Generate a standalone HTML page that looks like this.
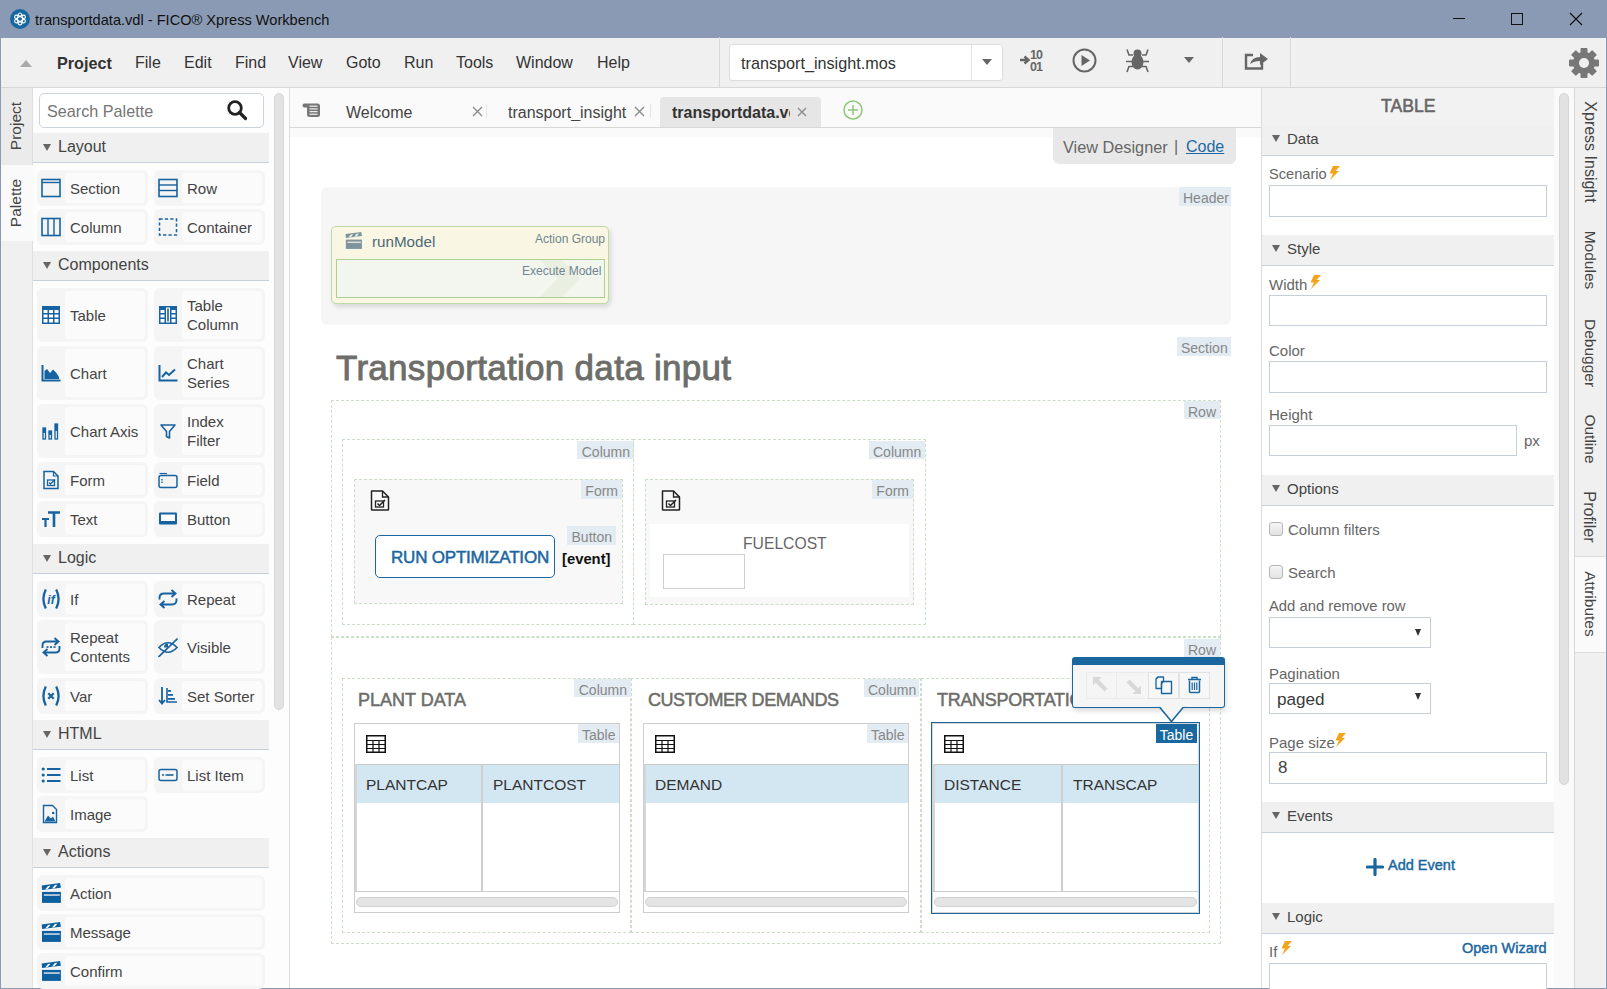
<!DOCTYPE html>
<html><head><meta charset="utf-8">
<style>
*{box-sizing:border-box;margin:0;padding:0}
html,body{width:1607px;height:989px;overflow:hidden;background:#f0f0f0;font-family:"Liberation Sans",sans-serif;color:#333}
.a{position:absolute}
.t{position:absolute;white-space:nowrap;line-height:1}
#title{left:0;top:0;width:1607px;height:38px;background:#8a9ab4}
#menubar{left:1px;top:38px;width:1605px;height:50px;background:#f0f0f0;border-bottom:1px solid #d8d8d8}
.menu{font-size:16px;color:#333;top:55px}
.sep{width:1px;background:#d9d9d9}
/* palette */
.ph{position:absolute;left:33px;width:236px;height:30px;background:#f0f0f0;border-bottom:1px solid #c6d1dc}
.ph .tri{position:absolute;left:10px;top:11px;width:0;height:0;border-left:4px solid transparent;border-right:4px solid transparent;border-top:7px solid #666}
.ph span{position:absolute;left:25px;top:4.5px;font-size:16px;color:#444;white-space:nowrap}
.pi{position:absolute;background:#f5f5f5;border-radius:6px;height:35px;width:110px}
.pi .in{position:absolute;left:28px;top:3px;right:3px;bottom:3px;background:#fbfbfb;border-radius:4px}
.pi .lbl{position:absolute;left:33px;font-size:15px;color:#444;line-height:19px;white-space:nowrap}
.pi svg{position:absolute;left:4px}
.tall{height:54px}
/* canvas */
.dash{position:absolute;border:1px dashed #c9dfc9}
.lab{position:absolute;background:#e3ebf3;color:#888;font-size:14px;line-height:19px;padding-top:2px !important;padding:0 4px;text-align:right;white-space:nowrap}
.inp{position:absolute;background:#fff;border:1px solid #c5ced9}
.rh{position:absolute;left:1262px;width:292px;height:31px;background:#f0f0f0;border-bottom:1px solid #c6d1dc}
.rh .tri{position:absolute;left:10px;top:10px;width:0;height:0;border-left:4px solid transparent;border-right:4px solid transparent;border-top:7px solid #666}
.rh span{position:absolute;left:25px;top:5px;font-size:15px;color:#444;white-space:nowrap}
.rl{position:absolute;left:1269px;font-size:15px;color:#666;white-space:nowrap;line-height:1}
.bolt{position:absolute}
.vtab{position:absolute;white-space:nowrap;font-size:15.5px;color:#444;line-height:1}
</style></head>
<body>
<!-- title bar -->
<div id="title" class="a">
  <svg class="a" style="left:9px;top:8px" width="22" height="22" viewBox="0 0 22 22">
    <circle cx="11" cy="11" r="10" fill="#16679f"/>
    <g fill="none" stroke="#fff" stroke-width="1.1">
      <ellipse cx="11" cy="11" rx="6" ry="2.4" transform="rotate(90 11 11)"/>
      <ellipse cx="11" cy="11" rx="6" ry="2.4" transform="rotate(30 11 11)"/>
      <ellipse cx="11" cy="11" rx="6" ry="2.4" transform="rotate(-30 11 11)"/>
    </g>
  </svg>
  <div class="t" style="left:35px;top:13px;font-size:14.6px;color:#111">transportdata.vdl - FICO® Xpress Workbench</div>
  <div class="a" style="left:1453px;top:18px;width:12px;height:1px;background:#111"></div>
  <div class="a" style="left:1511px;top:13px;width:12px;height:12px;border:1px solid #111"></div>
  <svg class="a" style="left:1569px;top:12px" width="14" height="14" viewBox="0 0 14 14"><path d="M1 1L13 13M13 1L1 13" stroke="#111" stroke-width="1.2"/></svg>
</div>
<!-- window borders -->
<div class="a" style="left:0;top:37px;width:1px;height:952px;background:#8a9ab4"></div>
<div class="a" style="left:1606px;top:37px;width:1px;height:952px;background:#8a9ab4"></div>
<div class="a" style="left:0;top:988px;width:1607px;height:1px;background:#8a9ab4"></div>

<!-- menubar -->
<div id="menubar" class="a"></div>
<div class="a" style="left:20px;top:60px;width:0;height:0;border-left:6px solid transparent;border-right:6px solid transparent;border-bottom:7px solid #aaa"></div>
<div class="t menu" style="left:57px;font-weight:bold;font-size:16.2px">Project</div>
<div class="t menu" style="left:135px">File</div>
<div class="t menu" style="left:184px">Edit</div>
<div class="t menu" style="left:235px">Find</div>
<div class="t menu" style="left:288px">View</div>
<div class="t menu" style="left:346px">Goto</div>
<div class="t menu" style="left:404px">Run</div>
<div class="t menu" style="left:456px">Tools</div>
<div class="t menu" style="left:516px">Window</div>
<div class="t menu" style="left:597px">Help</div>
<div class="a sep" style="left:719px;top:37px;height:50px"></div>
<div class="a" style="left:729px;top:44px;width:274px;height:37px;background:#fff;border:1px solid #dcdcdc;border-radius:3px"></div>
<div class="a sep" style="left:971px;top:45px;height:35px;background:#e3e3e3"></div>
<div class="t" style="left:741px;top:55px;font-size:16.2px;color:#333">transport_insight.mos</div>
<div class="a" style="left:982px;top:59px;width:0;height:0;border-left:5px solid transparent;border-right:5px solid transparent;border-top:6px solid #666"></div>
<svg class="a" style="left:1019px;top:48px" width="27" height="24" viewBox="0 0 27 24"><path d="M1 12H8M5.5 8.5L9.5 12L5.5 15.5" fill="none" stroke="#666" stroke-width="2.4"/><text x="11" y="11" font-family="Liberation Sans" font-weight="bold" font-size="12.5" fill="#666" textLength="13">10</text><text x="11" y="23" font-family="Liberation Sans" font-weight="bold" font-size="12.5" fill="#666" textLength="13">01</text></svg>
<svg class="a" style="left:1072px;top:48px" width="25" height="25" viewBox="0 0 25 25"><circle cx="12.5" cy="12.5" r="11" fill="none" stroke="#666" stroke-width="2"/><path d="M9.5 7V18L18 12.5Z" fill="#666"/></svg>
<svg class="a" style="left:1125px;top:48px" width="25" height="25" viewBox="0 0 25 25"><ellipse cx="12.5" cy="14" rx="6" ry="7.5" fill="#666"/><circle cx="12.5" cy="5.5" r="4" fill="#666"/><path d="M2 1.5L4 7H8M23 1.5L21 7H17M1 13.5H7M24 13.5H18M2 24L4 18.5H8M23 24L21 18.5H17" fill="none" stroke="#666" stroke-width="1.6"/></svg>
<div class="a" style="left:1184px;top:57px;width:0;height:0;border-left:5.5px solid transparent;border-right:5.5px solid transparent;border-top:6px solid #666"></div>
<svg class="a" style="left:1244px;top:51px" width="25" height="19" viewBox="0 0 25 19"><path d="M9 4H2V17.5H18V12" fill="none" stroke="#666" stroke-width="2.4"/><path d="M6 13Q8 6 16 6V2L24 8L16 14V10Q10 10 6 13Z" fill="#666"/></svg>
<svg class="a" style="left:1568px;top:47px" width="32" height="32" viewBox="0 0 32 32"><g fill="#777"><circle cx="16" cy="16" r="11"/><g id="teeth"><rect x="12.5" y="1" width="7" height="7" rx="1"/><rect x="12.5" y="24" width="7" height="7" rx="1"/><rect x="1" y="12.5" width="7" height="7" rx="1"/><rect x="24" y="12.5" width="7" height="7" rx="1"/></g><g transform="rotate(45 16 16)"><rect x="12.5" y="1" width="7" height="7" rx="1"/><rect x="12.5" y="24" width="7" height="7" rx="1"/><rect x="1" y="12.5" width="7" height="7" rx="1"/><rect x="24" y="12.5" width="7" height="7" rx="1"/></g></g><circle cx="16" cy="16" r="5" fill="#f0f0f0"/></svg>

<div class="a sep" style="left:1222px;top:37px;height:50px"></div>
<div class="a sep" style="left:1290px;top:37px;height:50px"></div>

<!-- left vertical tabs -->
<div class="a" style="left:1px;top:88px;width:32px;height:900px;background:#f0f0f0;border-right:1px solid #e0e0e0"></div>
<div class="a" style="left:1px;top:88px;width:32px;height:77px;background:#ebebeb;border-right:1px solid #dedede"></div>
<div class="a" style="left:1px;top:165px;width:33px;height:76px;background:#fafafa"></div>
<div class="vtab" style="left:16px;top:126px;transform:translate(-50%,-50%) rotate(-90deg);font-size:15.5px">Project</div>
<div class="vtab" style="left:16px;top:203px;transform:translate(-50%,-50%) rotate(-90deg);font-size:15.5px">Palette</div>

<!-- palette panel -->
<div class="a" style="left:33px;top:88px;width:257px;height:900px;background:#fdfdfd;border-right:1px solid #dcdcdc"></div>
<div class="a" style="left:39px;top:93px;width:225px;height:35px;background:#fff;border:1px solid #cbd3dd;border-radius:5px"></div>
<div class="t" style="left:47px;top:103px;font-size:16.2px;color:#757575">Search Palette</div>
<svg class="a" style="left:226px;top:99px" width="22" height="22" viewBox="0 0 22 22"><circle cx="9" cy="9" r="6.3" fill="none" stroke="#222" stroke-width="2.8"/><path d="M13.5 13.5L19.5 19.5" stroke="#222" stroke-width="3.2" stroke-linecap="round"/></svg>
<div class="a" style="left:274px;top:93px;width:10px;height:617px;background:#e2e2e2;border:1px solid #d6d6d6;border-radius:5px"></div>
<div class="ph" style="top:133px"><div class="tri"></div><span>Layout</span></div>
<div class="ph" style="top:251px"><div class="tri"></div><span>Components</span></div>
<div class="ph" style="top:544px"><div class="tri"></div><span>Logic</span></div>
<div class="ph" style="top:720px"><div class="tri"></div><span>HTML</span></div>
<div class="ph" style="top:838px"><div class="tri"></div><span>Actions</span></div>
<div class="pi" style="left:37px;top:170px;width:111px;height:36px"><div class="in"></div><svg style="top:8px" width="20" height="20" viewBox="0 0 20 20"><rect x="1" y="1.5" width="18" height="17" fill="none" stroke="#1762a0" stroke-width="1.6"/><line x1="1" y1="4.5" x2="19" y2="4.5" stroke="#1762a0" stroke-width="1.4"/></svg><div class="lbl" style="top:0;bottom:0;display:flex;align-items:center;padding-top:0px">Section</div></div>
<div class="pi" style="left:154px;top:170px;width:111px;height:36px"><div class="in"></div><svg style="top:8px" width="20" height="20" viewBox="0 0 20 20"><rect x="1" y="1.5" width="18" height="17" fill="none" stroke="#1762a0" stroke-width="1.6"/><line x1="1" y1="7" x2="19" y2="7" stroke="#1762a0" stroke-width="1.4"/><line x1="1" y1="12.5" x2="19" y2="12.5" stroke="#1762a0" stroke-width="1.4"/></svg><div class="lbl" style="top:0;bottom:0;display:flex;align-items:center;padding-top:0px">Row</div></div>
<div class="pi" style="left:37px;top:209px;width:111px;height:36px"><div class="in"></div><svg style="top:8px" width="20" height="20" viewBox="0 0 20 20"><rect x="1" y="1.5" width="18" height="17" fill="none" stroke="#1762a0" stroke-width="1.6"/><line x1="7" y1="1.5" x2="7" y2="18.5" stroke="#1762a0" stroke-width="1.4"/><line x1="13" y1="1.5" x2="13" y2="18.5" stroke="#1762a0" stroke-width="1.4"/></svg><div class="lbl" style="top:0;bottom:0;display:flex;align-items:center;padding-top:0px">Column</div></div>
<div class="pi" style="left:154px;top:209px;width:111px;height:36px"><div class="in"></div><svg style="top:8px" width="20" height="20" viewBox="0 0 20 20"><rect x="1.5" y="2" width="17" height="16" fill="none" stroke="#1762a0" stroke-width="1.5" stroke-dasharray="3.2 2.2"/></svg><div class="lbl" style="top:0;bottom:0;display:flex;align-items:center;padding-top:0px">Container</div></div>
<div class="pi" style="left:37px;top:288px;width:111px;height:54px"><div class="in"></div><svg style="top:17px" width="20" height="20" viewBox="0 0 20 20"><rect x="1" y="1" width="18" height="18" fill="#1762a0"/><g fill="#fff"><rect x="2.5" y="5" width="4" height="3"/><rect x="8" y="5" width="4" height="3"/><rect x="13.5" y="5" width="4" height="3"/><rect x="2.5" y="9.5" width="4" height="3"/><rect x="8" y="9.5" width="4" height="3"/><rect x="13.5" y="9.5" width="4" height="3"/><rect x="2.5" y="14" width="4" height="3.5"/><rect x="8" y="14" width="4" height="3.5"/><rect x="13.5" y="14" width="4" height="3.5"/></g></svg><div class="lbl" style="top:0;bottom:0;display:flex;align-items:center;padding-top:0px">Table</div></div>
<div class="pi" style="left:154px;top:288px;width:111px;height:54px"><div class="in"></div><svg style="top:17px" width="20" height="20" viewBox="0 0 20 20"><rect x="1" y="1" width="18" height="18" fill="#1762a0"/><g fill="#fff"><rect x="2.5" y="5" width="4" height="3"/><rect x="13.5" y="5" width="4" height="3"/><rect x="2.5" y="9.5" width="4" height="3"/><rect x="13.5" y="9.5" width="4" height="3"/><rect x="2.5" y="14" width="4" height="3.5"/><rect x="13.5" y="14" width="4" height="3.5"/><rect x="8" y="2.5" width="4" height="15"/></g><rect x="9.2" y="3.5" width="1.6" height="13" fill="#1762a0"/></svg><div class="lbl" style="top:0;bottom:0;display:flex;align-items:center;padding-top:0px">Table<br>Column</div></div>
<div class="pi" style="left:37px;top:346px;width:111px;height:54px"><div class="in"></div><svg style="top:17px" width="20" height="20" viewBox="0 0 20 20"><path d="M1.5 2V17.5H19.5" fill="none" stroke="#1762a0" stroke-width="2"/><path d="M3.5 16V8L6 6L9 10L12 6.5L15 9.5L18 14V16Z" fill="#1762a0"/></svg><div class="lbl" style="top:0;bottom:0;display:flex;align-items:center;padding-top:0px">Chart</div></div>
<div class="pi" style="left:154px;top:346px;width:111px;height:54px"><div class="in"></div><svg style="top:17px" width="20" height="20" viewBox="0 0 20 20"><path d="M1.5 2V17.5H19.5" fill="none" stroke="#1762a0" stroke-width="2"/><path d="M4 14L8 9.5L11 12L17 6.5" fill="none" stroke="#1762a0" stroke-width="2"/></svg><div class="lbl" style="top:0;bottom:0;display:flex;align-items:center;padding-top:0px">Chart<br>Series</div></div>
<div class="pi" style="left:37px;top:404px;width:111px;height:54px"><div class="in"></div><svg style="top:17px" width="20" height="20" viewBox="0 0 20 20"><g fill="none" stroke="#1762a0" stroke-width="1.3"><rect x="2" y="7" width="2.5" height="11"/><rect x="8" y="10" width="2.5" height="8"/><rect x="14" y="3" width="2.5" height="15"/></g><g fill="#1762a0"><rect x="2" y="7" width="2.5" height="5"/><rect x="8" y="10" width="2.5" height="4"/><rect x="14" y="3" width="2.5" height="7"/></g></svg><div class="lbl" style="top:0;bottom:0;display:flex;align-items:center;padding-top:0px">Chart Axis</div></div>
<div class="pi" style="left:154px;top:404px;width:111px;height:54px"><div class="in"></div><svg style="top:17px" width="20" height="20" viewBox="0 0 20 20"><path d="M3 4H17L11.5 10.5V17L8.5 15.5V10.5Z" fill="none" stroke="#1762a0" stroke-width="1.6" stroke-linejoin="round"/></svg><div class="lbl" style="top:0;bottom:0;display:flex;align-items:center;padding-top:0px">Index<br>Filter</div></div>
<div class="pi" style="left:37px;top:462px;width:111px;height:36px"><div class="in"></div><svg style="top:8px" width="20" height="20" viewBox="0 0 20 20"><path d="M3 1.5H12.5L17 6V18.5H3Z" fill="none" stroke="#1762a0" stroke-width="1.5"/><path d="M12.5 1.5V6H17" fill="none" stroke="#1762a0" stroke-width="1.2"/><rect x="6.5" y="10" width="7" height="5.5" fill="none" stroke="#1762a0" stroke-width="1.3"/><path d="M8 12.5L9.5 14L14 9.5" fill="none" stroke="#1762a0" stroke-width="1.4"/></svg><div class="lbl" style="top:0;bottom:0;display:flex;align-items:center;padding-top:0px">Form</div></div>
<div class="pi" style="left:154px;top:462px;width:111px;height:36px"><div class="in"></div><svg style="top:8px" width="20" height="20" viewBox="0 0 20 20"><rect x="1" y="5.5" width="18" height="12" rx="2" fill="none" stroke="#1762a0" stroke-width="1.5"/><path d="M1.5 3.5H9" stroke="#1762a0" stroke-width="1.2"/><path d="M4 9V14" stroke="#1762a0" stroke-width="1.3" stroke-dasharray="1.5 1"/></svg><div class="lbl" style="top:0;bottom:0;display:flex;align-items:center;padding-top:0px">Field</div></div>
<div class="pi" style="left:37px;top:501px;width:111px;height:36px"><div class="in"></div><svg style="top:8px" width="20" height="20" viewBox="0 0 20 20"><path d="M1 10H8M4.5 10V18" stroke="#1762a0" stroke-width="2.2" fill="none"/><path d="M7 3.5H19M13 3.5V18" stroke="#1762a0" stroke-width="2.6" fill="none"/></svg><div class="lbl" style="top:0;bottom:0;display:flex;align-items:center;padding-top:0px">Text</div></div>
<div class="pi" style="left:154px;top:501px;width:111px;height:36px"><div class="in"></div><svg style="top:8px" width="20" height="20" viewBox="0 0 20 20"><rect x="1" y="3.5" width="18" height="12" rx="1" fill="#1762a0"/><rect x="3" y="5.5" width="14" height="6.5" fill="#fff"/></svg><div class="lbl" style="top:0;bottom:0;display:flex;align-items:center;padding-top:0px">Button</div></div>
<div class="pi" style="left:37px;top:581px;width:111px;height:36px"><div class="in"></div><svg style="top:8px" width="20" height="20" viewBox="0 0 20 20"><path d="M4.8 0.5Q0 10 4.8 19.5" fill="none" stroke="#1762a0" stroke-width="2.3"/><path d="M15.2 0.5Q20 10 15.2 19.5" fill="none" stroke="#1762a0" stroke-width="2.3"/><text x="10" y="14.5" font-family="Liberation Sans" font-style="italic" font-size="12" font-weight="bold" fill="#1762a0" text-anchor="middle">if</text></svg><div class="lbl" style="top:0;bottom:0;display:flex;align-items:center;padding-top:0px">If</div></div>
<div class="pi" style="left:154px;top:581px;width:111px;height:36px"><div class="in"></div><svg style="top:8px" width="20" height="20" viewBox="0 0 20 20"><path d="M1.5 10.5V9Q1.5 4.5 6 4.5H17M13.5 1L17.5 4.5L13.5 8" fill="none" stroke="#1762a0" stroke-width="1.9"/><path d="M18.5 9.5V11Q18.5 15.5 14 15.5H3M6.5 19L2.5 15.5L6.5 12" fill="none" stroke="#1762a0" stroke-width="1.9"/></svg><div class="lbl" style="top:0;bottom:0;display:flex;align-items:center;padding-top:0px">Repeat</div></div>
<div class="pi" style="left:37px;top:620px;width:111px;height:54px"><div class="in"></div><svg style="top:17px" width="20" height="20" viewBox="0 0 20 20"><path d="M1.5 11V8.5Q1.5 4.5 5.5 4.5H17M13.5 1L17.5 4.5L13.5 8" fill="none" stroke="#1762a0" stroke-width="1.9"/><path d="M18.5 9V11.5Q18.5 15.5 14.5 15.5H3M6.5 19L2.5 15.5L6.5 12" fill="none" stroke="#1762a0" stroke-width="1.9"/><g fill="#1762a0"><rect x="5.5" y="9.2" width="2" height="1.7"/><rect x="9" y="9.2" width="2" height="1.7"/><rect x="12.5" y="9.2" width="2" height="1.7"/></g></svg><div class="lbl" style="top:0;bottom:0;display:flex;align-items:center;padding-top:0px">Repeat<br>Contents</div></div>
<div class="pi" style="left:154px;top:620px;width:111px;height:54px"><div class="in"></div><svg style="top:17px" width="20" height="20" viewBox="0 0 20 20"><path d="M1 10.5Q10 1 19 10.5Q10 20 1 10.5Z" fill="none" stroke="#1762a0" stroke-width="1.7"/><path d="M10 6.5A4 4 0 0 0 6 10.5H10Z" fill="#1762a0"/><path d="M0.5 20L19.5 1.5" stroke="#1762a0" stroke-width="1.6"/></svg><div class="lbl" style="top:0;bottom:0;display:flex;align-items:center;padding-top:0px">Visible</div></div>
<div class="pi" style="left:37px;top:678px;width:111px;height:36px"><div class="in"></div><svg style="top:8px" width="20" height="20" viewBox="0 0 20 20"><path d="M4.8 0.5Q0 10 4.8 19.5" fill="none" stroke="#1762a0" stroke-width="2.3"/><path d="M15.2 0.5Q20 10 15.2 19.5" fill="none" stroke="#1762a0" stroke-width="2.3"/><path d="M7.3 7.3L12.7 12.7M12.7 7.3L7.3 12.7" stroke="#1762a0" stroke-width="2.2"/></svg><div class="lbl" style="top:0;bottom:0;display:flex;align-items:center;padding-top:0px">Var</div></div>
<div class="pi" style="left:154px;top:678px;width:111px;height:36px"><div class="in"></div><svg style="top:8px" width="20" height="20" viewBox="0 0 20 20"><path d="M4 1V17M1 14L4 17.5L7 14" fill="none" stroke="#1762a0" stroke-width="1.8"/><path d="M9 2V16H19" fill="none" stroke="#1762a0" stroke-width="1.6"/><g fill="#1762a0"><rect x="10" y="4" width="3" height="1.8"/><rect x="10" y="8" width="5" height="1.8"/><rect x="10" y="12" width="7" height="1.8"/></g></svg><div class="lbl" style="top:0;bottom:0;display:flex;align-items:center;padding-top:0px">Set Sorter</div></div>
<div class="pi" style="left:37px;top:757px;width:111px;height:36px"><div class="in"></div><svg style="top:8px" width="20" height="20" viewBox="0 0 20 20"><g fill="#1762a0"><circle cx="2.2" cy="4" r="1.6"/><circle cx="2.2" cy="10" r="1.6"/><circle cx="2.2" cy="16" r="1.6"/><rect x="6" y="3" width="13.5" height="2"/><rect x="6" y="9" width="13.5" height="2"/><rect x="6" y="15" width="13.5" height="2"/></g></svg><div class="lbl" style="top:0;bottom:0;display:flex;align-items:center;padding-top:0px">List</div></div>
<div class="pi" style="left:154px;top:757px;width:111px;height:36px"><div class="in"></div><svg style="top:8px" width="20" height="20" viewBox="0 0 20 20"><rect x="1" y="4.5" width="18" height="11" rx="2" fill="none" stroke="#1762a0" stroke-width="1.5"/><circle cx="5" cy="10" r="1" fill="#1762a0"/><rect x="7.5" y="9.2" width="8" height="1.6" fill="#1762a0"/></svg><div class="lbl" style="top:0;bottom:0;display:flex;align-items:center;padding-top:0px">List Item</div></div>
<div class="pi" style="left:37px;top:796px;width:111px;height:36px"><div class="in"></div><svg style="top:8px" width="20" height="20" viewBox="0 0 20 20"><path d="M2.5 1.5H11.5L15.5 5.5V18.5H2.5Z" fill="none" stroke="#1762a0" stroke-width="1.4"/><path d="M3.5 17.5L7 11.5L10 14.5L12 12.5L14.5 17.5Z" fill="#1762a0"/><circle cx="12.2" cy="9" r="1.3" fill="#1762a0"/></svg><div class="lbl" style="top:0;bottom:0;display:flex;align-items:center;padding-top:0px">Image</div></div>
<div class="pi" style="left:37px;top:875px;width:228px;height:36px"><div class="in"></div><svg style="top:8px" width="20" height="20" viewBox="0 0 20 20"><path d="M0.7 2.4L19.1 0.1L19.9 4.8L1.1 7.1Z" fill="#0e5f9e"/><path d="M4.2 6.4L7 3L9.6 2.7L6.8 6.1Z M11 5.6L13.8 2.1L16.4 1.8L13.6 5.3Z" fill="#f5f5f5"/><rect x="1" y="8.9" width="18.9" height="11" fill="#0e5f9e"/><rect x="2.8" y="11.4" width="16" height="1.3" fill="#f5f5f5"/></svg><div class="lbl" style="top:0;bottom:0;display:flex;align-items:center;padding-top:0px">Action</div></div>
<div class="pi" style="left:37px;top:914px;width:228px;height:36px"><div class="in"></div><svg style="top:8px" width="20" height="20" viewBox="0 0 20 20"><path d="M0.7 2.4L19.1 0.1L19.9 4.8L1.1 7.1Z" fill="#0e5f9e"/><path d="M4.2 6.4L7 3L9.6 2.7L6.8 6.1Z M11 5.6L13.8 2.1L16.4 1.8L13.6 5.3Z" fill="#f5f5f5"/><rect x="1" y="8.9" width="18.9" height="11" fill="#0e5f9e"/><rect x="2.8" y="11.4" width="16" height="1.3" fill="#f5f5f5"/></svg><div class="lbl" style="top:0;bottom:0;display:flex;align-items:center;padding-top:0px">Message</div></div>
<div class="pi" style="left:37px;top:953px;width:228px;height:36px"><div class="in"></div><svg style="top:8px" width="20" height="20" viewBox="0 0 20 20"><path d="M0.7 2.4L19.1 0.1L19.9 4.8L1.1 7.1Z" fill="#0e5f9e"/><path d="M4.2 6.4L7 3L9.6 2.7L6.8 6.1Z M11 5.6L13.8 2.1L16.4 1.8L13.6 5.3Z" fill="#f5f5f5"/><rect x="1" y="8.9" width="18.9" height="11" fill="#0e5f9e"/><rect x="2.8" y="11.4" width="16" height="1.3" fill="#f5f5f5"/></svg><div class="lbl" style="top:0;bottom:0;display:flex;align-items:center;padding-top:0px">Confirm</div></div>


<!-- center -->
<div class="a" style="left:290px;top:88px;width:971px;height:40px;background:#fafafa;border-bottom:1px solid #d8d8d8"></div>

<div class="a" style="left:290px;top:128px;width:971px;height:860px;background:#fff"></div>
<div class="a" style="left:290px;top:128px;width:971px;height:9px;background:#fafafa"></div>
<!-- tab bar -->
<svg class="a" style="left:302px;top:103px" width="19" height="15" viewBox="0 0 19 15"><path d="M2.5 0.5H15.5Q18 0.5 18 3V11.5Q18 14 15.5 14H8Q5 14 5 11.5V4.5H2.5Q0.5 4.5 0.5 2.5Q0.5 0.5 2.5 0.5Z" fill="#777"/><g fill="#fafafa"><rect x="7.5" y="2.6" width="8" height="1.1"/><rect x="7.5" y="5.4" width="8" height="1.1"/><rect x="7.5" y="8.1" width="8" height="1.1"/><rect x="7.5" y="10.7" width="8" height="1.1"/></g></svg>
<div class="t" style="left:346px;top:105px;font-size:16px;color:#444">Welcome</div>
<svg class="a" style="left:472px;top:106px" width="11" height="11" viewBox="0 0 11 11"><path d="M1 1L10 10M10 1L1 10" stroke="#888" stroke-width="1.3"/></svg>
<div class="a" style="left:486px;top:104px;width:1px;height:14px;background:#e6e6e6"></div>
<div class="t" style="left:508px;top:105px;font-size:16px;color:#444;width:119px;overflow:hidden">transport_insight</div>
<svg class="a" style="left:634px;top:106px" width="11" height="11" viewBox="0 0 11 11"><path d="M1 1L10 10M10 1L1 10" stroke="#888" stroke-width="1.3"/></svg>
<div class="a" style="left:650px;top:104px;width:1px;height:14px;background:#e6e6e6"></div>
<div class="a" style="left:660px;top:97px;width:161px;height:30px;background:#e6e6e6;border-radius:4px 4px 0 0"></div>
<div class="t" style="left:672px;top:105px;font-size:16px;font-weight:bold;color:#333;width:118px;overflow:hidden">transportdata.vdl</div>
<svg class="a" style="left:797px;top:107px" width="10" height="10" viewBox="0 0 10 10"><path d="M1 1L9 9M9 1L1 9" stroke="#888" stroke-width="1.3"/></svg>
<svg class="a" style="left:843px;top:100px" width="20" height="20" viewBox="0 0 20 20"><circle cx="10" cy="10" r="9" fill="none" stroke="#8fc77a" stroke-width="1.5"/><path d="M10 5V15M5 10H15" stroke="#8fc77a" stroke-width="1.5"/></svg>

<!-- view designer / code -->
<div class="a" style="left:1053px;top:128px;width:183px;height:36px;background:#e8e8e8;border-radius:0 0 6px 6px"></div>
<div class="t" style="left:1063px;top:139px;font-size:16.3px;color:#666">View Designer</div><div class="t" style="left:1174px;top:139px;font-size:16px;color:#666">|</div><div class="t" style="left:1186px;top:139px;font-size:16px;color:#1b6aa5;text-decoration:underline">Code</div>

<!-- header block -->
<div class="a" style="left:321px;top:187px;width:910px;height:138px;background:#f6f6f6;border-radius:6px"></div>
<div class="lab" style="left:1179px;top:187px;width:52px;height:19px">Header</div>
<div class="a" style="left:331px;top:226px;width:278px;height:78px;background:#f9f7e3;border:1px solid #bcdba4;border-radius:5px;box-shadow:2px 3px 5px rgba(0,0,0,0.12)"></div>
<svg class="a" style="left:345px;top:232px" width="17" height="17" viewBox="0 0 20 20"><path d="M0.7 2.4L19.1 0.1L19.9 4.8L1.1 7.1Z" fill="#7d949c"/><path d="M4.2 6.4L7 3L9.6 2.7L6.8 6.1Z M11 5.6L13.8 2.1L16.4 1.8L13.6 5.3Z" fill="#f9f7e3"/><rect x="1" y="8.9" width="18.9" height="11" fill="#7d949c"/><rect x="2.8" y="11.4" width="16" height="1.3" fill="#f9f7e3"/></svg>
<div class="t" style="left:372px;top:234px;font-size:15.2px;color:#4f6878">runModel</div>
<div class="t" style="left:535px;top:233px;font-size:12px;color:#6f8490">Action Group</div>
<div class="a" style="left:336px;top:259px;width:269px;height:39px;background:#f3f6ee;border:1px solid #a9d291"></div>
<svg class="a" style="left:535px;top:260px" width="45" height="37" viewBox="0 0 45 37"><path d="M5 0H27L45 18.5L27 37H5L23 18.5Z" fill="#e9f0e1"/></svg>
<div class="t" style="left:522px;top:265px;font-size:12px;color:#6f8490">Execute Model</div>

<!-- section title -->
<div class="lab" style="left:1177px;top:337px;width:54px;height:19px">Section</div>
<div class="t" style="left:336px;top:350px;font-size:35px;color:#6d6d69;-webkit-text-stroke:0.9px #6d6d69;letter-spacing:0.3px">Transportation data input</div>

<!-- row 1 -->
<div class="dash" style="left:331px;top:400px;width:890px;height:237px"></div>
<div class="lab" style="left:1184px;top:401px;width:36px;height:18px">Row</div>
<div class="dash" style="left:342px;top:439px;width:292px;height:186px"></div>
<div class="lab" style="left:577px;top:441px;width:57px;height:18px">Column</div>
<div class="dash" style="left:354px;top:479px;width:269px;height:125px;background:#f8f8f8"></div>
<div class="lab" style="left:581px;top:480px;width:41px;height:19px">Form</div>
<svg class="a" style="left:370px;top:490px" width="20" height="21" viewBox="0 0 20 21"><path d="M1.5 1H12.5L18.5 7V19.5Q18.5 20 18 20H2Q1.5 20 1.5 19.5Z" fill="none" stroke="#222" stroke-width="1.5" stroke-linejoin="round"/><path d="M12.5 1V7H18.5" fill="none" stroke="#222" stroke-width="1.3"/><rect x="5.5" y="11" width="8" height="6" fill="none" stroke="#222" stroke-width="1.3"/><path d="M7.5 13.5L9.5 15.5L15 10" fill="none" stroke="#222" stroke-width="1.5"/></svg>
<div class="lab" style="left:567px;top:526px;width:49px;height:19px">Button</div>
<div class="a" style="left:375px;top:535px;width:180px;height:43px;background:#fff;border:1px solid #1a67a0;border-radius:5px"></div>
<div class="t" style="left:391px;top:549px;font-size:17px;color:#1a67a0;-webkit-text-stroke:0.5px #1a67a0;letter-spacing:-0.2px">RUN OPTIMIZATION</div>
<div class="t" style="left:562px;top:552px;font-size:14.8px;font-weight:bold;color:#111">[event]</div>

<div class="dash" style="left:633px;top:439px;width:293px;height:186px"></div>
<div class="lab" style="left:869px;top:441px;width:56px;height:18px">Column</div>
<div class="dash" style="left:645px;top:479px;width:269px;height:126px;background:#f8f8f8"></div>
<div class="lab" style="left:872px;top:480px;width:41px;height:19px">Form</div>
<svg class="a" style="left:661px;top:490px" width="20" height="21" viewBox="0 0 20 21"><path d="M1.5 1H12.5L18.5 7V19.5Q18.5 20 18 20H2Q1.5 20 1.5 19.5Z" fill="none" stroke="#222" stroke-width="1.5" stroke-linejoin="round"/><path d="M12.5 1V7H18.5" fill="none" stroke="#222" stroke-width="1.3"/><rect x="5.5" y="11" width="8" height="6" fill="none" stroke="#222" stroke-width="1.3"/><path d="M7.5 13.5L9.5 15.5L15 10" fill="none" stroke="#222" stroke-width="1.5"/></svg>
<div class="a" style="left:650px;top:524px;width:259px;height:73px;background:#fff"></div>
<div class="t" style="left:743px;top:536px;font-size:15.7px;color:#666">FUELCOST</div>
<div class="a" style="left:663px;top:554px;width:82px;height:35px;background:#fff;border:1px solid #cfcfcf"></div>

<!-- row 2 -->
<div class="dash" style="left:331px;top:637px;width:890px;height:307px"></div>
<div class="lab" style="left:1184px;top:639px;width:36px;height:18px">Row</div>

<div class="dash" style="left:342px;top:678px;width:289px;height:255px"></div>
<div class="lab" style="left:574px;top:679px;width:57px;height:18px">Column</div>
<div class="t" style="left:358px;top:691px;font-size:18px;color:#6d6d69;-webkit-text-stroke:0.5px #6d6d69">PLANT DATA</div>
<div class="a" style="left:354px;top:723px;width:266px;height:190px;background:#fff;border:1px solid #cdcdcd"></div>
<div class="lab" style="left:578px;top:724px;width:41px;height:19px">Table</div>
<svg class="a" style="left:366px;top:735px" width="20" height="18" viewBox="0 0 20 18"><rect x="0.75" y="0.75" width="18.5" height="16.5" fill="none" stroke="#111" stroke-width="1.5"/><path d="M0.75 5.5H19.25M0.75 9.5H19.25M0.75 13.5H19.25M7 5.5V17.25M13 5.5V17.25" stroke="#111" stroke-width="1.2"/></svg>
<div class="a" style="left:355px;top:764px;width:264px;height:39px;background:#d3e7f2;border-top:1px solid #c8c8c8"></div>
<div class="a" style="left:355px;top:891px;width:264px;height:1px;background:#cdcdcd"></div>
<div class="a" style="left:481px;top:764px;width:2px;height:127px;background:#cfcfcf"></div>
<div class="a" style="left:355px;top:764px;width:2px;height:127px;background:#d6d6d6"></div>
<div class="t" style="left:366px;top:777px;font-size:15.5px;color:#333">PLANTCAP</div>
<div class="t" style="left:493px;top:777px;font-size:15.5px;color:#333">PLANTCOST</div>
<div class="a" style="left:356px;top:897px;width:262px;height:10px;background:#e4e4e4;border:1px solid #d2d2d2;border-radius:5px"></div>

<div class="dash" style="left:631px;top:678px;width:290px;height:255px"></div>
<div class="lab" style="left:864px;top:679px;width:55px;height:18px">Column</div>
<div class="t" style="left:648px;top:691px;font-size:18px;color:#6d6d69;-webkit-text-stroke:0.5px #6d6d69;letter-spacing:-0.45px">CUSTOMER DEMANDS</div>
<div class="a" style="left:643px;top:723px;width:266px;height:190px;background:#fff;border:1px solid #cdcdcd"></div>
<div class="lab" style="left:867px;top:724px;width:41px;height:19px">Table</div>
<svg class="a" style="left:655px;top:735px" width="20" height="18" viewBox="0 0 20 18"><rect x="0.75" y="0.75" width="18.5" height="16.5" fill="none" stroke="#111" stroke-width="1.5"/><path d="M0.75 5.5H19.25M0.75 9.5H19.25M0.75 13.5H19.25M7 5.5V17.25M13 5.5V17.25" stroke="#111" stroke-width="1.2"/></svg>
<div class="a" style="left:644px;top:764px;width:264px;height:39px;background:#d3e7f2;border-top:1px solid #c8c8c8"></div>
<div class="a" style="left:644px;top:891px;width:264px;height:1px;background:#cdcdcd"></div>
<div class="a" style="left:644px;top:764px;width:2px;height:127px;background:#d6d6d6"></div>
<div class="t" style="left:655px;top:777px;font-size:15.5px;color:#333">DEMAND</div>
<div class="a" style="left:645px;top:897px;width:262px;height:10px;background:#e4e4e4;border:1px solid #d2d2d2;border-radius:5px"></div>

<div class="dash" style="left:921px;top:678px;width:289px;height:255px"></div>
<div class="t" style="left:937px;top:691px;font-size:18px;color:#6d6d69;-webkit-text-stroke:0.5px #6d6d69;letter-spacing:-0.3px">TRANSPORTATION</div>
<div class="a" style="left:931px;top:722px;width:269px;height:192px;background:#fff;border:1px solid #1a67a0;box-shadow:inset 0 0 0 1px #d4d4d4"></div>
<div class="a" style="left:1156px;top:724px;width:41px;height:19px;background:#1a67a0;color:#fff;font-size:14px;line-height:19px;padding-top:2px;text-align:center">Table</div>
<svg class="a" style="left:944px;top:735px" width="20" height="18" viewBox="0 0 20 18"><rect x="0.75" y="0.75" width="18.5" height="16.5" fill="none" stroke="#111" stroke-width="1.5"/><path d="M0.75 5.5H19.25M0.75 9.5H19.25M0.75 13.5H19.25M7 5.5V17.25M13 5.5V17.25" stroke="#111" stroke-width="1.2"/></svg>
<div class="a" style="left:933px;top:764px;width:265px;height:39px;background:#d3e7f2;border-top:1px solid #c8c8c8"></div>
<div class="a" style="left:933px;top:891px;width:265px;height:1px;background:#cdcdcd"></div>
<div class="a" style="left:1061px;top:764px;width:2px;height:127px;background:#cfcfcf"></div>
<div class="a" style="left:933px;top:764px;width:2px;height:127px;background:#d6d6d6"></div>
<div class="t" style="left:944px;top:777px;font-size:15.5px;color:#333">DISTANCE</div>
<div class="t" style="left:1073px;top:777px;font-size:15.5px;color:#333">TRANSCAP</div>
<div class="a" style="left:934px;top:897px;width:263px;height:10px;background:#e4e4e4;border:1px solid #d2d2d2;border-radius:5px"></div>

<!-- toolbar popup -->
<div class="a" style="left:1072px;top:657px;width:153px;height:51px;background:#f5f5f5;border:1px solid #1a67a0;border-top:8px solid #1a67a0;border-radius:3px;box-shadow:1px 3px 5px rgba(0,0,0,0.15)"></div>
<svg class="a" style="left:1156px;top:706px" width="31" height="17" viewBox="0 0 31 17"><path d="M0 1H3.5L15.5 15.5L27.5 1H31" fill="#f5f5f5" stroke="#1a67a0" stroke-width="1.6"/><rect x="0" y="0" width="31" height="0.9" fill="#f5f5f5"/></svg>
<div class="a" style="left:1086px;top:672px;width:124px;height:27px;border:1px solid #ebebeb;background:#f5f5f5"></div>
<div class="a" style="left:1116px;top:672px;width:1px;height:27px;background:#ebebeb"></div>
<div class="a" style="left:1148px;top:672px;width:31px;height:27px;border:1px solid #e2e2e2;background:#f7f7f7"></div>
<div class="a" style="left:1179px;top:672px;width:31px;height:27px;border:1px solid #e2e2e2;background:#f7f7f7"></div>
<svg class="a" style="left:1092px;top:676px" width="18" height="18" viewBox="0 0 18 18"><path d="M1 1H9.5L6.8 3.7L15.5 12.5L12.5 15.5L3.7 6.8L1 9.5Z" fill="#d8d8d8"/></svg>
<svg class="a" style="left:1124px;top:677px" width="18" height="18" viewBox="0 0 18 18"><path d="M17 17H8.5L11.2 14.3L2.5 5.5L5.5 2.5L14.3 11.2L17 8.5Z" fill="#d8d8d8"/></svg>
<svg class="a" style="left:1155px;top:676px" width="19" height="19" viewBox="0 0 19 19"><path d="M3 1H8.5V5.5H6.5V12.5H1V3Z" fill="none" stroke="#1a67a0" stroke-width="1.3" stroke-linejoin="round"/><path d="M3 1L1 3" stroke="#1a67a0" stroke-width="1.3"/><path d="M8.5 5.5H16.5V17.5H6.5V7.5Z" fill="none" stroke="#1a67a0" stroke-width="1.4" stroke-linejoin="round"/></svg>
<svg class="a" style="left:1187px;top:676px" width="15" height="18" viewBox="0 0 15 18"><path d="M1 3.5H14M5 3.5V1.5H10V3.5" fill="none" stroke="#1a67a0" stroke-width="1.5"/><path d="M2.5 4.5V15.5Q2.5 16.5 3.5 16.5H11.5Q12.5 16.5 12.5 15.5V4.5" fill="none" stroke="#1a67a0" stroke-width="1.5"/><path d="M5.2 6.5V14M7.5 6.5V14M9.8 6.5V14" stroke="#1a67a0" stroke-width="1.2"/></svg>


<!-- right panel -->
<div class="a" style="left:1261px;top:88px;width:313px;height:900px;background:#fff;border-left:1px solid #dcdcdc"></div>
<div class="a" style="left:1262px;top:88px;width:292px;height:68px;background:#f2f2f2"></div>
<div class="t" style="left:1381px;top:98px;font-size:17.6px;color:#666;-webkit-text-stroke:0.5px #666">TABLE</div>
<div class="rh" style="top:125px"><div class="tri"></div><span>Data</span></div>
<div class="rl" style="left:1269px;top:167px;font-size:14.6px">Scenario</div>
<svg class="bolt" style="left:1328px;top:166px" width="13" height="14" viewBox="0 0 13 14"><path d="M5 0H12L7.5 5H11L2 14L5 7.5H1.5Z" fill="#f5a31a"/></svg>
<div class="inp" style="left:1269px;top:185px;width:278px;height:32px"></div>

<div class="rh" style="top:235px"><div class="tri"></div><span>Style</span></div>
<div class="rl" style="left:1269px;top:276.5px;font-size:15px">Width</div>
<svg class="bolt" style="left:1309px;top:275px" width="13" height="14" viewBox="0 0 13 14"><path d="M5 0H12L7.5 5H11L2 14L5 7.5H1.5Z" fill="#f5a31a"/></svg>
<div class="inp" style="left:1269px;top:295px;width:278px;height:31px"></div>
<div class="rl" style="left:1269px;top:342.5px;font-size:15px">Color</div>
<div class="inp" style="left:1269px;top:361px;width:278px;height:32px"></div>
<div class="rl" style="left:1269px;top:406.5px;font-size:15px">Height</div>
<div class="inp" style="left:1269px;top:425px;width:248px;height:31px"></div>
<div class="rl" style="left:1524px;top:433px;font-size:15px">px</div>

<div class="rh" style="top:475px"><div class="tri"></div><span>Options</span></div>
<div class="a" style="left:1269px;top:522px;width:14px;height:14px;border:1px solid #b5b5b5;border-radius:3px;background:linear-gradient(#f5f5f5,#e3e3e3)"></div>
<div class="rl" style="left:1288px;top:522px;font-size:15px">Column filters</div>
<div class="a" style="left:1269px;top:565px;width:14px;height:14px;border:1px solid #b5b5b5;border-radius:3px;background:linear-gradient(#f5f5f5,#e3e3e3)"></div>
<div class="rl" style="left:1288px;top:565px;font-size:15px">Search</div>
<div class="rl" style="left:1269px;top:599px;font-size:14.8px">Add and remove row</div>
<div class="inp" style="left:1269px;top:617px;width:162px;height:31px"></div>
<div class="a" style="left:1415px;top:629px;width:0;height:0;border-left:3.5px solid transparent;border-right:3.5px solid transparent;border-top:7px solid #333"></div>
<div class="rl" style="left:1269px;top:666px;font-size:15px">Pagination</div>
<div class="inp" style="left:1269px;top:683px;width:162px;height:31px"></div>
<div class="rl" style="left:1277px;top:691px;font-size:17.1px;color:#3a3a3a">paged</div>
<div class="a" style="left:1415px;top:693px;width:0;height:0;border-left:3.5px solid transparent;border-right:3.5px solid transparent;border-top:7px solid #333"></div>
<div class="rl" style="left:1269px;top:734.5px;font-size:15px">Page size</div>
<svg class="bolt" style="left:1334px;top:733px" width="13" height="14" viewBox="0 0 13 14"><path d="M5 0H12L7.5 5H11L2 14L5 7.5H1.5Z" fill="#f5a31a"/></svg>
<div class="inp" style="left:1269px;top:752px;width:278px;height:32px"></div>
<div class="rl" style="left:1278px;top:759px;font-size:17px;color:#444">8</div>

<div class="rh" style="top:802px"><div class="tri"></div><span>Events</span></div>
<svg class="a" style="left:1366px;top:858px" width="18" height="18" viewBox="0 0 18 18"><path d="M9 1.5V16.5M1.5 9H16.5" stroke="#1a67a0" stroke-width="3.2" stroke-linecap="round"/></svg>
<div class="t" style="left:1388px;top:858px;font-size:14.5px;color:#1a67a0;-webkit-text-stroke:0.45px #1a67a0">Add Event</div>

<div class="rh" style="top:903px"><div class="tri"></div><span>Logic</span></div>
<div class="rl" style="left:1269px;top:943.5px;font-size:15px">If</div>
<svg class="bolt" style="left:1280px;top:941px" width="13" height="14" viewBox="0 0 13 14"><path d="M5 0H12L7.5 5H11L2 14L5 7.5H1.5Z" fill="#f5a31a"/></svg>
<div class="t" style="left:1462px;top:941px;font-size:14.5px;color:#1a67a0;-webkit-text-stroke:0.45px #1a67a0">Open Wizard</div>
<div class="inp" style="left:1269px;top:963px;width:278px;height:32px"></div>

<!-- scrollbar -->
<div class="a" style="left:1554px;top:88px;width:20px;height:900px;background:#fafafa"></div>
<div class="a" style="left:1559px;top:93px;width:10px;height:692px;background:#e2e2e2;border:1px solid #d6d6d6;border-radius:5px"></div>


<!-- right vertical tabs -->
<div class="a" style="left:1574px;top:88px;width:32px;height:900px;background:#f0f0f0;border-left:1px solid #d8d8d8"></div>
<div class="a" style="left:1575px;top:557px;width:31px;height:95px;background:#fafafa"></div>
<div class="a" style="left:1575px;top:556px;width:31px;height:1px;background:#dcdcdc"></div>
<div class="a" style="left:1575px;top:652px;width:31px;height:1px;background:#dcdcdc"></div>
<div class="vtab" style="left:1590px;top:152px;transform:translate(-50%,-50%) rotate(90deg);font-size:16px">Xpress Insight</div>
<div class="vtab" style="left:1590px;top:260px;transform:translate(-50%,-50%) rotate(90deg)">Modules</div>
<div class="vtab" style="left:1590px;top:353px;transform:translate(-50%,-50%) rotate(90deg)">Debugger</div>
<div class="vtab" style="left:1590px;top:439px;transform:translate(-50%,-50%) rotate(90deg)">Outline</div>
<div class="vtab" style="left:1590px;top:517px;transform:translate(-50%,-50%) rotate(90deg);font-size:16.2px">Profiler</div>
<div class="vtab" style="left:1590px;top:604px;transform:translate(-50%,-50%) rotate(90deg)">Attributes</div>

</body></html>
